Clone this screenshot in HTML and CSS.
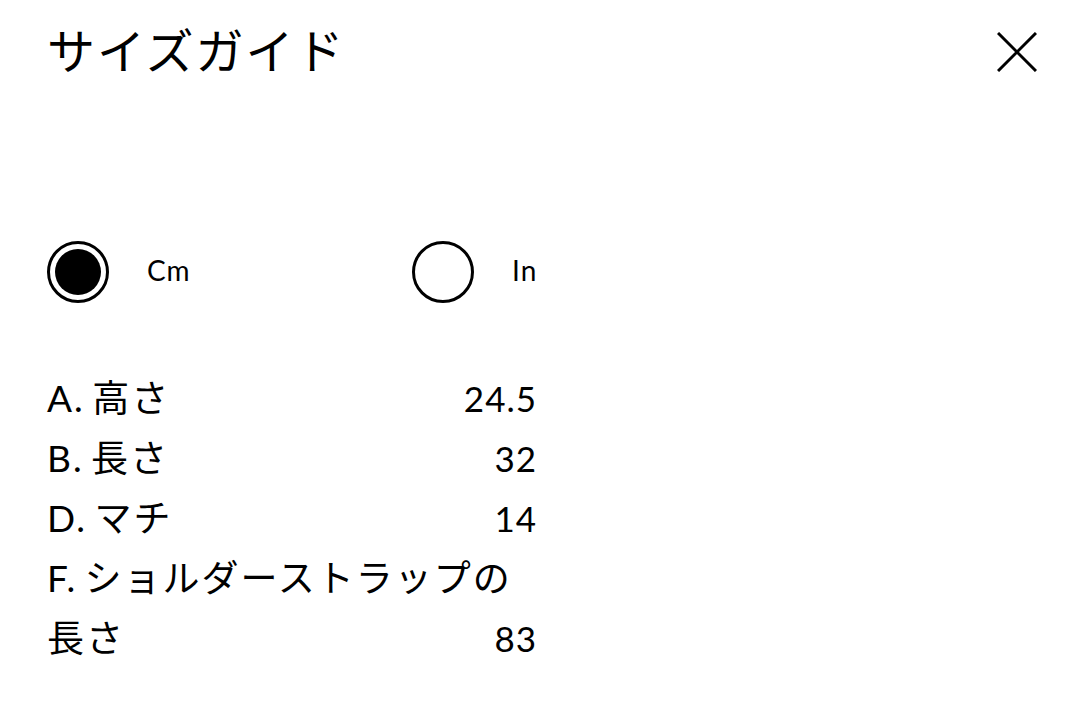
FILE: index.html
```html
<!DOCTYPE html>
<html lang="ja">
<head>
<meta charset="utf-8">
<title>サイズガイド</title>
<link rel="stylesheet" href="styles.css">
</head>
<body>
<div class="page">
  <header class="header">
    <h1 class="title">サイズガイド</h1>
    <button class="close" aria-label="閉じる">
      <svg width="40" height="40" viewBox="0 0 40 40"><path d="M1 1L39 39M39 1L1 39" stroke="#000" stroke-width="3" fill="none"/></svg>
    </button>
  </header>
  <div class="units">
    <label class="unit"><span class="radio checked"><span class="dot"></span></span><span class="unit-label">Cm</span></label>
    <label class="unit"><span class="radio"></span><span class="unit-label">In</span></label>
  </div>
  <div class="rows">
    <div class="row"><span class="label">A. 高さ</span><span class="value">24.5</span></div>
    <div class="row"><span class="label">B. 長さ</span><span class="value">32</span></div>
    <div class="row"><span class="label">D. マチ</span><span class="value">14</span></div>
    <div class="row"><span class="label">F. ショルダーストラップの<br>長さ</span><span class="value">83</span></div>
  </div>
</div>
</body>
</html>
```

FILE: styles.css
```css
html, body {
  margin: 0;
  padding: 0;
  background: #fff;
  color: #000;
}
body {
  font-family: "Lato", "Noto Sans CJK JP", sans-serif;
}
.page {
  padding: 24px 43px 0 47px;
}
.header {
  display: flex;
  justify-content: space-between;
  align-items: flex-start;
}
.title {
  margin: 0;
  font-family: "Noto Sans CJK JP", sans-serif;
  font-weight: 400;
  font-size: 48px;
  line-height: 48px;
  letter-spacing: 2px;
}
.close {
  border: 0;
  background: none;
  padding: 0;
  margin-top: 8px;
  width: 40px;
  height: 40px;
  display: block;
}
.close svg { display: block; }
.units {
  margin-top: 169px;
  display: grid;
  grid-template-columns: 365px 200px;
}
.unit {
  display: flex;
  align-items: center;
  gap: 38px;
}
.radio {
  width: 62px;
  height: 62px;
  box-sizing: border-box;
  border: 3px solid #000;
  border-radius: 50%;
  display: flex;
  align-items: center;
  justify-content: center;
}
.dot {
  width: 46px;
  height: 46px;
  border-radius: 50%;
  background: #000;
}
.unit-label {
  font-size: 28px;
  line-height: 1;
  letter-spacing: 1px;
  margin-top: -4px;
}
.rows {
  margin-top: 65px;
  width: 489px;
}
.row {
  display: grid;
  font-size: 37px;
  line-height: 60px;
  letter-spacing: 2px;
  word-spacing: -4px;
}
.label, .value {
  grid-area: 1 / 1;
}
.value {
  justify-self: end;
  align-self: end;
  font-size: 35px;
  letter-spacing: 1px;
  margin-right: -1px;
}
```
